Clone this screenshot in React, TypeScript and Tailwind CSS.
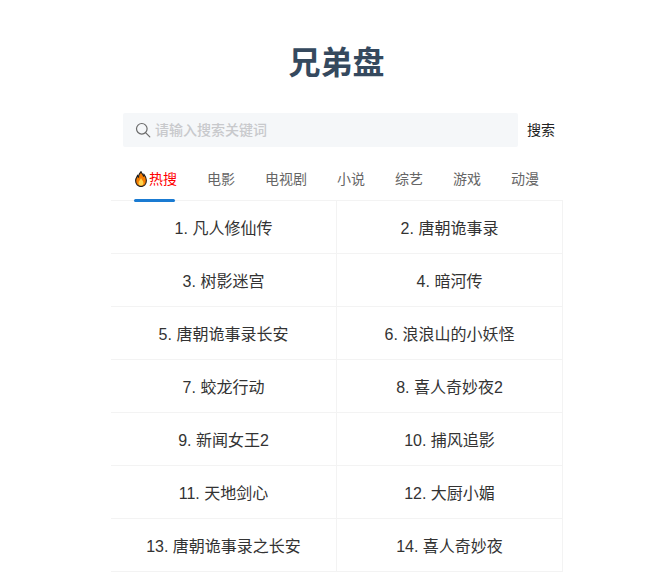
const tabs = ['电影', '电视剧', '小说', '综艺', '游戏', '动漫']

const items = [
  '凡人修仙传',
  '唐朝诡事录',
  '树影迷宫',
  '暗河传',
  '唐朝诡事录长安',
  '浪浪山的小妖怪',
  '蛟龙行动',
  '喜人奇妙夜2',
  '新闻女王2',
  '捕风追影',
  '天地剑心',
  '大厨小媚',
  '唐朝诡事录之长安',
  '喜人奇妙夜',
]

function Flame() {
  return (
    <svg width="12" height="16" viewBox="0 0 15 18" preserveAspectRatio="none" className="ml-px mr-[2px] shrink-0">
      <path d="M7.5 0.8C8.4 3 10 3.6 10.6 5.6C11.2 5.2 11.4 4.6 11.4 4C13.2 6 14.2 8.2 14.2 10.8C14.2 14.8 11.4 17.4 7.5 17.4C3.6 17.4 0.8 14.8 0.8 11C0.8 8.4 2.2 6.8 3.2 5.2C3.6 6 3.8 6.4 4.4 6.8C4.4 4.2 5.8 2.4 7.5 0.8Z" fill="#f57c00" stroke="#1d1d1d" strokeWidth="1.4" />
      <path d="M7.6 8C8 10 10.6 11 10.6 13.4C10.6 15.2 9.2 16.4 7.5 16.4C5.8 16.4 4.4 15.2 4.4 13.4C4.4 11.2 6.8 10.2 7.6 8Z" fill="#ffd54f" />
    </svg>
  )
}

export default function App() {
  return (
    <div className="min-h-[577px] overflow-hidden bg-white font-['Liberation_Sans','Noto_Sans_CJK_SC',sans-serif]">
      <div className="ml-[111px] w-[452px]">
        <h1 className="pt-[41px] pr-px text-center text-[32px] leading-[44px] font-bold text-[#35495e]">兄弟盘</h1>

        <div className="mt-[28px] flex items-center pl-3">
          <div className="flex h-[34px] w-[395px] items-center gap-1 rounded-[2px] bg-[#f5f7f9] pl-3">
            <svg width="16" height="16" viewBox="0 0 16 16" fill="none" className="shrink-0">
              <circle cx="6.8" cy="6.8" r="5.3" stroke="#6b6b6b" strokeWidth="1.2" />
              <path d="M10.8 10.8L14.8 14.8" stroke="#6b6b6b" strokeWidth="1.2" strokeLinecap="round" />
            </svg>
            <span className="text-sm font-medium text-[#c8c9cc]">请输入搜索关键词</span>
          </div>
          <span className="ml-[9px] text-sm text-[#222]">搜索</span>
        </div>

        <div className="mt-[15px] flex h-[39px] items-start border-b border-[#f3f3f3] pl-[23px] text-sm text-[#666]">
          <div className="relative mr-[30px] flex h-[39px] items-center pb-[5px] text-[#ff0000]">
            <Flame />
            <span>热搜</span>
            <div className="absolute bottom-[-1px] left-0 h-[3px] w-[41px] rounded-sm bg-[#1a7bd2]" />
          </div>
          <div className="flex h-[39px] items-center gap-[30px] pb-[5px]">
            {tabs.map((tab) => (
              <span key={tab}>{tab}</span>
            ))}
          </div>
        </div>

        <div className="grid grid-cols-2">
          {items.map((name, i) => (
            <div
              key={name}
              className="flex h-[53px] items-center justify-center border-r border-b border-[#f3f3f3] pt-1 text-base text-[#333]"
            >
              {i + 1}. {name}
            </div>
          ))}
        </div>
      </div>
    </div>
  )
}
